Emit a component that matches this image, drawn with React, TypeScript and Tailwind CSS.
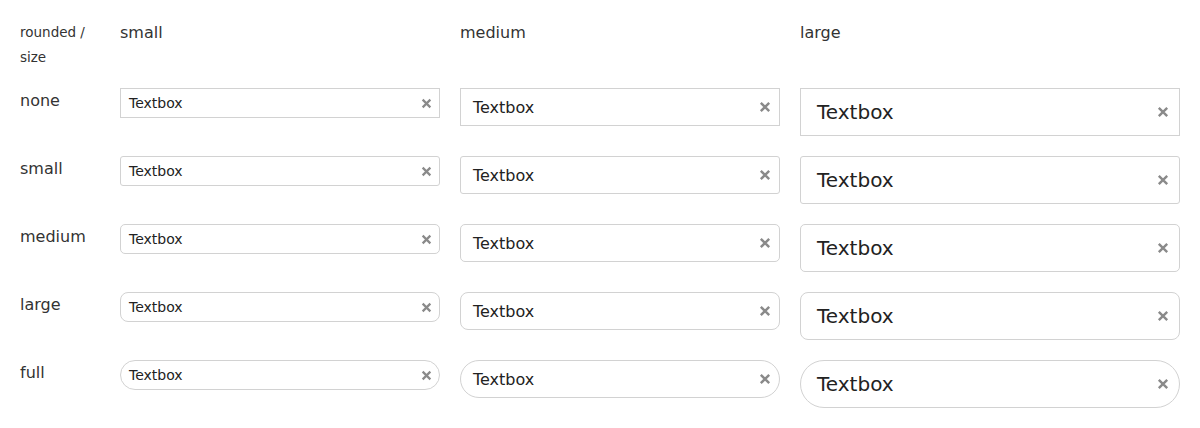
import React from "react";

const radii = [
  { label: "none", cls: "rounded-none" },
  { label: "small", cls: "rounded-[3px]" },
  { label: "medium", cls: "rounded-[5px]" },
  { label: "large", cls: "rounded-[8px]" },
  { label: "full", cls: "rounded-full" },
];

const sizes = [
  { h: "h-[30px]", text: "text-[14px]", pl: "pl-[8px]", pr: "pr-[7px]", icon: 11, tp: "" },
  { h: "h-[38px]", text: "text-[16px]", pl: "pl-[12px]", pr: "pr-[8px]", icon: 12, tp: "pt-[1px]" },
  { h: "h-[48px]", text: "text-[20px]", pl: "pl-[16px]", pr: "pr-[10px]", icon: 12, tp: "" },
];

function X({ s }: { s: number }) {
  return (
    <svg width={s} height={s} viewBox="0 0 10 10" className="shrink-0">
      <path d="M1.5 1.5 L8.5 8.5 M8.5 1.5 L1.5 8.5" stroke="#8a8a8a" strokeWidth="2" strokeLinecap="butt" />
    </svg>
  );
}

export default function App() {
  return (
    <div
      className="bg-white min-h-[428px] pt-[20px] pl-[20px] text-[#333]"
      style={{ fontFamily: '"DejaVu Sans", sans-serif' }}
    >
      <div className="grid grid-cols-[80px_320px_320px_380px] gap-x-[20px] gap-y-[20px]">
        <div className="text-[13.5px] leading-[25px] h-[48px]">
          rounded /<br />size
        </div>
        <div className="text-[16px] leading-[24px] pt-[1px]">small</div>
        <div className="text-[16px] leading-[24px] pt-[1px]">medium</div>
        <div className="text-[16px] leading-[24px] pt-[1px]">large</div>
        {radii.map((r) => (
          <React.Fragment key={r.label}>
            <div className="text-[16px] leading-[24px] h-[48px] pt-[1px]">{r.label}</div>
            {sizes.map((s, i) => (
              <div key={i}>
                <div
                  className={`flex items-center justify-between border border-[#d2d2d2] bg-white ${r.cls} ${s.h} ${s.pl} ${s.pr}`}
                >
                  <span className={`${s.text} ${s.tp} text-[#222]`}>Textbox</span>
                  <X s={s.icon} />
                </div>
              </div>
            ))}
          </React.Fragment>
        ))}
      </div>
    </div>
  );
}
